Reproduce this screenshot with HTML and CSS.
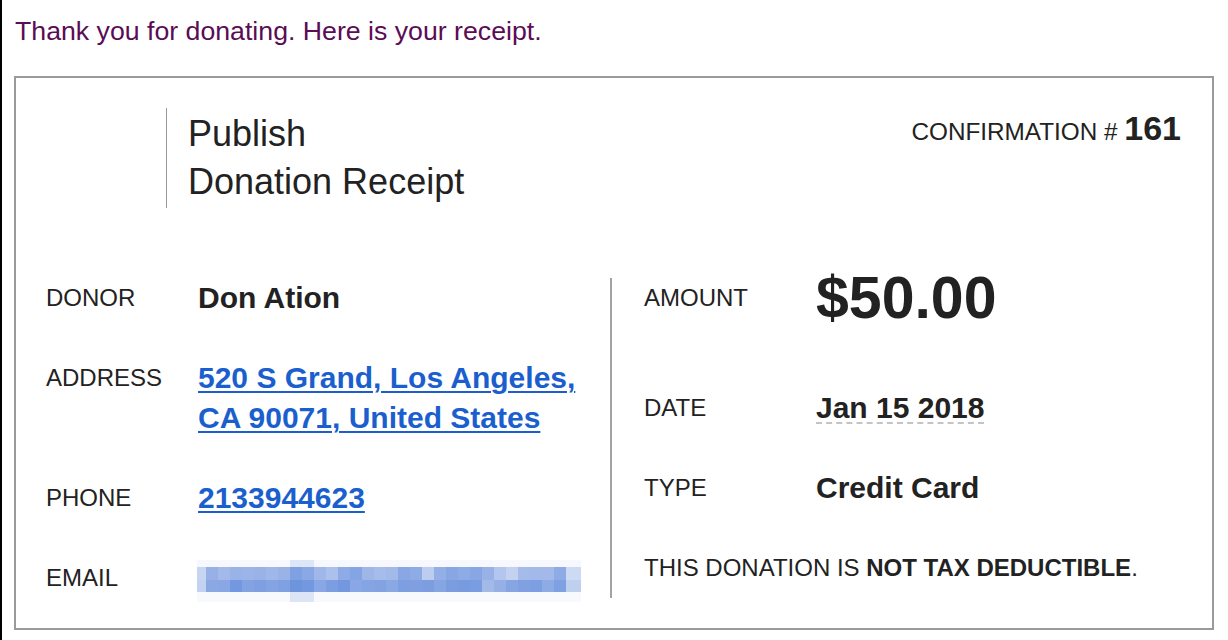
FILE: index.html
```html
<!DOCTYPE html>
<html lang="en">
<head>
    <meta charset="UTF-8">
    <meta name="viewport" content="width=device-width, initial-scale=1.0">
    <title>Donation Receipt</title>
    <link rel="stylesheet" href="styles.css">
</head>
<body>
    <div class="page">
        <p class="thanks">Thank you for donating. Here is your receipt.</p>

        <div class="receipt">
            <div class="receipt-header">
                <div class="receipt-title">Publish<br>Donation Receipt</div>
                <div class="confirmation">CONFIRMATION # <strong>161</strong></div>
            </div>

            <div class="receipt-body">
                <div class="col col-donor">
                    <div class="row">
                        <span class="label">DONOR</span>
                        <span class="value">Don Ation</span>
                    </div>
                    <div class="row">
                        <span class="label">ADDRESS</span>
                        <a class="value link" href="#">520 S Grand, Los Angeles,<br>CA 90071, United States</a>
                    </div>
                    <div class="row">
                        <span class="label">PHONE</span>
                        <a class="value link" href="#">2133944623</a>
                    </div>
                    <div class="row">
                        <span class="label">EMAIL</span>
                        <svg class="email-blur" width="384" height="42" viewBox="0 0 384 42">
                            <rect x="0" y="0" width="384" height="7" fill="#f6f8fd"/>
                            <rect x="93" y="0" width="24" height="7" fill="#dde6f7"/>
                            <rect x="0" y="32" width="384" height="10" fill="#f7f9fd"/>
                            <rect x="93" y="32" width="24" height="10" fill="#dce5f6"/>
                            <g class="blur-top">
                                <rect x="0" y="7" width="9" height="13" fill="#c6d6f1"/>
                                <rect x="9" y="7" width="12" height="13" fill="#97b1e6"/>
                                <rect x="21" y="7" width="12" height="13" fill="#a2b9e9"/>
                                <rect x="33" y="7" width="12" height="13" fill="#9ab3e7"/>
                                <rect x="45" y="7" width="12" height="13" fill="#9cb4e8"/>
                                <rect x="57" y="7" width="12" height="13" fill="#9ab3e7"/>
                                <rect x="69" y="7" width="12" height="13" fill="#a0b7e9"/>
                                <rect x="81" y="7" width="12" height="13" fill="#9ab3e7"/>
                                <rect x="93" y="7" width="12" height="13" fill="#7fa0e1"/>
                                <rect x="105" y="7" width="12" height="13" fill="#8aa8e4"/>
                                <rect x="117" y="7" width="12" height="13" fill="#a0b8e9"/>
                                <rect x="129" y="7" width="12" height="13" fill="#abc0eb"/>
                                <rect x="141" y="7" width="12" height="13" fill="#8eabe5"/>
                                <rect x="153" y="7" width="12" height="13" fill="#84a4e3"/>
                                <rect x="165" y="7" width="12" height="13" fill="#9fb7e8"/>
                                <rect x="177" y="7" width="12" height="13" fill="#a6bcea"/>
                                <rect x="189" y="7" width="12" height="13" fill="#a3bae9"/>
                                <rect x="201" y="7" width="12" height="13" fill="#88a7e4"/>
                                <rect x="213" y="7" width="12" height="13" fill="#8eabe5"/>
                                <rect x="225" y="7" width="12" height="13" fill="#bccdef"/>
                                <rect x="237" y="7" width="12" height="13" fill="#93afe6"/>
                                <rect x="249" y="7" width="12" height="13" fill="#87a6e3"/>
                                <rect x="261" y="7" width="12" height="13" fill="#8dabe5"/>
                                <rect x="273" y="7" width="12" height="13" fill="#87a6e3"/>
                                <rect x="285" y="7" width="12" height="13" fill="#98b2e7"/>
                                <rect x="297" y="7" width="12" height="13" fill="#b3c6ed"/>
                                <rect x="309" y="7" width="12" height="13" fill="#c2d2f0"/>
                                <rect x="321" y="7" width="12" height="13" fill="#a5bbea"/>
                                <rect x="333" y="7" width="12" height="13" fill="#a2b9e9"/>
                                <rect x="345" y="7" width="12" height="13" fill="#a2b9e9"/>
                                <rect x="357" y="7" width="12" height="13" fill="#8dabe5"/>
                                <rect x="369" y="7" width="15" height="13" fill="#cddaf3"/>
                            </g>
                            <g class="blur-bottom">
                                <rect x="0" y="20" width="9" height="12" fill="#c2d2f0"/>
                                <rect x="9" y="20" width="12" height="12" fill="#8aa8e4"/>
                                <rect x="21" y="20" width="12" height="12" fill="#88a7e4"/>
                                <rect x="33" y="20" width="12" height="12" fill="#7498df"/>
                                <rect x="45" y="20" width="12" height="12" fill="#82a2e2"/>
                                <rect x="57" y="20" width="12" height="12" fill="#7f9fe1"/>
                                <rect x="69" y="20" width="12" height="12" fill="#83a3e2"/>
                                <rect x="81" y="20" width="12" height="12" fill="#80a1e1"/>
                                <rect x="93" y="20" width="12" height="12" fill="#6f94de"/>
                                <rect x="105" y="20" width="12" height="12" fill="#7398df"/>
                                <rect x="117" y="20" width="12" height="12" fill="#88a7e4"/>
                                <rect x="129" y="20" width="12" height="12" fill="#7c9ee0"/>
                                <rect x="141" y="20" width="12" height="12" fill="#7498df"/>
                                <rect x="153" y="20" width="12" height="12" fill="#88a7e4"/>
                                <rect x="165" y="20" width="12" height="12" fill="#84a4e3"/>
                                <rect x="177" y="20" width="12" height="12" fill="#82a2e2"/>
                                <rect x="189" y="20" width="12" height="12" fill="#8aa8e4"/>
                                <rect x="201" y="20" width="12" height="12" fill="#7d9fe1"/>
                                <rect x="213" y="20" width="12" height="12" fill="#7f9fe1"/>
                                <rect x="225" y="20" width="12" height="12" fill="#7c9ee0"/>
                                <rect x="237" y="20" width="12" height="12" fill="#86a5e3"/>
                                <rect x="249" y="20" width="12" height="12" fill="#7b9de0"/>
                                <rect x="261" y="20" width="12" height="12" fill="#789be0"/>
                                <rect x="273" y="20" width="12" height="12" fill="#7a9ce0"/>
                                <rect x="285" y="20" width="12" height="12" fill="#a3bae9"/>
                                <rect x="297" y="20" width="12" height="12" fill="#96b0e6"/>
                                <rect x="309" y="20" width="12" height="12" fill="#85a5e3"/>
                                <rect x="321" y="20" width="12" height="12" fill="#80a0e1"/>
                                <rect x="333" y="20" width="12" height="12" fill="#7d9fe1"/>
                                <rect x="345" y="20" width="12" height="12" fill="#8dabe5"/>
                                <rect x="357" y="20" width="12" height="12" fill="#80a1e1"/>
                                <rect x="369" y="20" width="15" height="12" fill="#bfd0ef"/>
                            </g>
                        </svg>
                    </div>
                </div>

                <div class="col col-payment">
                    <div class="row row-amount">
                        <span class="label label-wide">AMOUNT</span>
                        <span class="value amount">$50.00</span>
                    </div>
                    <div class="row">
                        <span class="label label-wide">DATE</span>
                        <span class="value date">Jan 15 2018</span>
                    </div>
                    <div class="row">
                        <span class="label label-wide">TYPE</span>
                        <span class="value">Credit Card</span>
                    </div>
                    <p class="note">THIS DONATION IS <strong>NOT TAX DEDUCTIBLE</strong>.</p>
                </div>
            </div>
        </div>
    </div>
</body>
</html>
```

FILE: styles.css
```css
html,
body {
    margin: 0;
    padding: 0;
    background-color: #fff;
}

body {
    min-height: 100vh;
    border-left: 2px solid #000;
    box-sizing: border-box;
    font-family: 'Liberation Sans', Arial, sans-serif;
    color: #222;
}

.page {
    padding: 15px 12px 0 12px;
}

.thanks {
    margin: 0 0 29px 1px;
    font-size: 26.7px;
    line-height: 32px;
    color: #5a0c55;
}

.receipt {
    width: 1200px;
    box-sizing: border-box;
    border: 2px solid #9a9a9a;
    padding: 30px 0;
}

.receipt-header {
    display: flex;
    justify-content: space-between;
    align-items: flex-start;
}

.receipt-title {
    margin-left: 150px;
    padding: 2px 0 2px 21px;
    border-left: 1px solid #999;
    font-size: 36px;
    line-height: 48px;
}

.confirmation {
    padding-right: 31px;
    font-size: 24.3px;
    line-height: 40px;
}

.confirmation strong {
    font-size: 34px;
}

.receipt-body {
    display: flex;
    margin-top: 70px;
}

.col-donor {
    width: 596px;
    box-sizing: border-box;
    padding-left: 30px;
    border-right: 2px solid #a3a3a3;
}

.col-payment {
    padding-left: 32px;
}

.row {
    display: flex;
    align-items: flex-start;
    line-height: 40px;
}

.row + .row,
.row + .note {
    margin-top: 40px;
}

.row-amount {
    padding-bottom: 30px;
}

.label {
    flex: none;
    width: 152px;
    font-size: 24px;
}

.label-wide {
    width: 172px;
}

.value {
    font-size: 30px;
    font-weight: bold;
    color: #222;
}

.link {
    color: #1b5fce;
    text-decoration: underline;
    text-decoration-thickness: 2px;
    text-underline-offset: 3px;
}

.amount {
    font-size: 59px;
}

.date {
    text-decoration: underline dashed #c4c4c4;
    text-decoration-thickness: 2px;
    text-underline-offset: 4px;
}

.email-blur {
    display: block;
    margin: 2px 0 -4px -1px;
}

.note {
    margin-bottom: 0;
    font-size: 24px;
    line-height: 40px;
}
```
